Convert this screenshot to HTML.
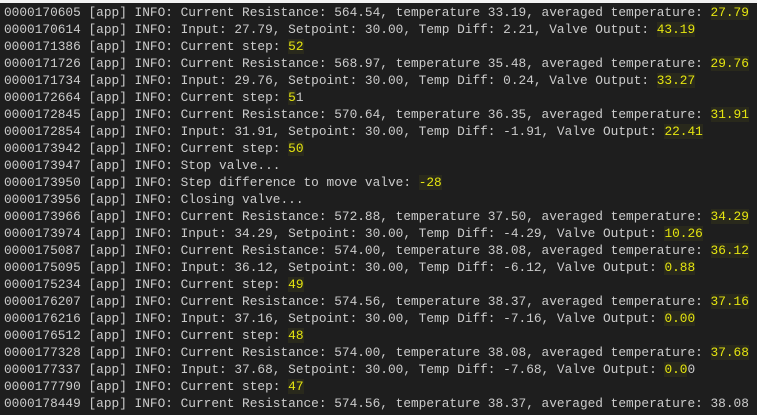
<!DOCTYPE html>
<html><head><meta charset="utf-8"><style>
html,body{margin:0;padding:0;width:757px;height:415px;overflow:hidden;background:#1e1e1e}
.top{height:3px;background:#f3f3f3}
pre{margin:0;padding:1px 0 0 4px;font-family:"Liberation Mono",monospace;font-size:12.8px;line-height:17px;color:#cccccc;white-space:pre}
.y{color:#e5e510;background:#29291c}
</style></head><body><div class="top"></div><pre>0000170605 [app] INFO: Current Resistance: 564.54, temperature 33.19, averaged temperature: <span class="y">27.79</span>
0000170614 [app] INFO: Input: 27.79, Setpoint: 30.00, Temp Diff: 2.21, Valve Output: <span class="y">43.19</span>
0000171386 [app] INFO: Current step: <span class="y">52</span>
0000171726 [app] INFO: Current Resistance: 568.97, temperature 35.48, averaged temperature: <span class="y">29.76</span>
0000171734 [app] INFO: Input: 29.76, Setpoint: 30.00, Temp Diff: 0.24, Valve Output: <span class="y">33.27</span>
0000172664 [app] INFO: Current step: <span class="y">5</span>1
0000172845 [app] INFO: Current Resistance: 570.64, temperature 36.35, averaged temperature: <span class="y">31.91</span>
0000172854 [app] INFO: Input: 31.91, Setpoint: 30.00, Temp Diff: -1.91, Valve Output: <span class="y">22.41</span>
0000173942 [app] INFO: Current step: <span class="y">50</span>
0000173947 [app] INFO: Stop valve...
0000173950 [app] INFO: Step difference to move valve: <span class="y">-28</span>
0000173956 [app] INFO: Closing valve...
0000173966 [app] INFO: Current Resistance: 572.88, temperature 37.50, averaged temperature: <span class="y">34.29</span>
0000173974 [app] INFO: Input: 34.29, Setpoint: 30.00, Temp Diff: -4.29, Valve Output: <span class="y">10.26</span>
0000175087 [app] INFO: Current Resistance: 574.00, temperature 38.08, averaged temperature: <span class="y">36.12</span>
0000175095 [app] INFO: Input: 36.12, Setpoint: 30.00, Temp Diff: -6.12, Valve Output: <span class="y">0.88</span>
0000175234 [app] INFO: Current step: <span class="y">49</span>
0000176207 [app] INFO: Current Resistance: 574.56, temperature 38.37, averaged temperature: <span class="y">37.16</span>
0000176216 [app] INFO: Input: 37.16, Setpoint: 30.00, Temp Diff: -7.16, Valve Output: <span class="y">0.00</span>
0000176512 [app] INFO: Current step: <span class="y">48</span>
0000177328 [app] INFO: Current Resistance: 574.00, temperature 38.08, averaged temperature: <span class="y">37.68</span>
0000177337 [app] INFO: Input: 37.68, Setpoint: 30.00, Temp Diff: -7.68, Valve Output: <span class="y">0.0</span>0
0000177790 [app] INFO: Current step: <span class="y">47</span>
0000178449 [app] INFO: Current Resistance: 574.56, temperature 38.37, averaged temperature: 38.08</pre></body></html>
